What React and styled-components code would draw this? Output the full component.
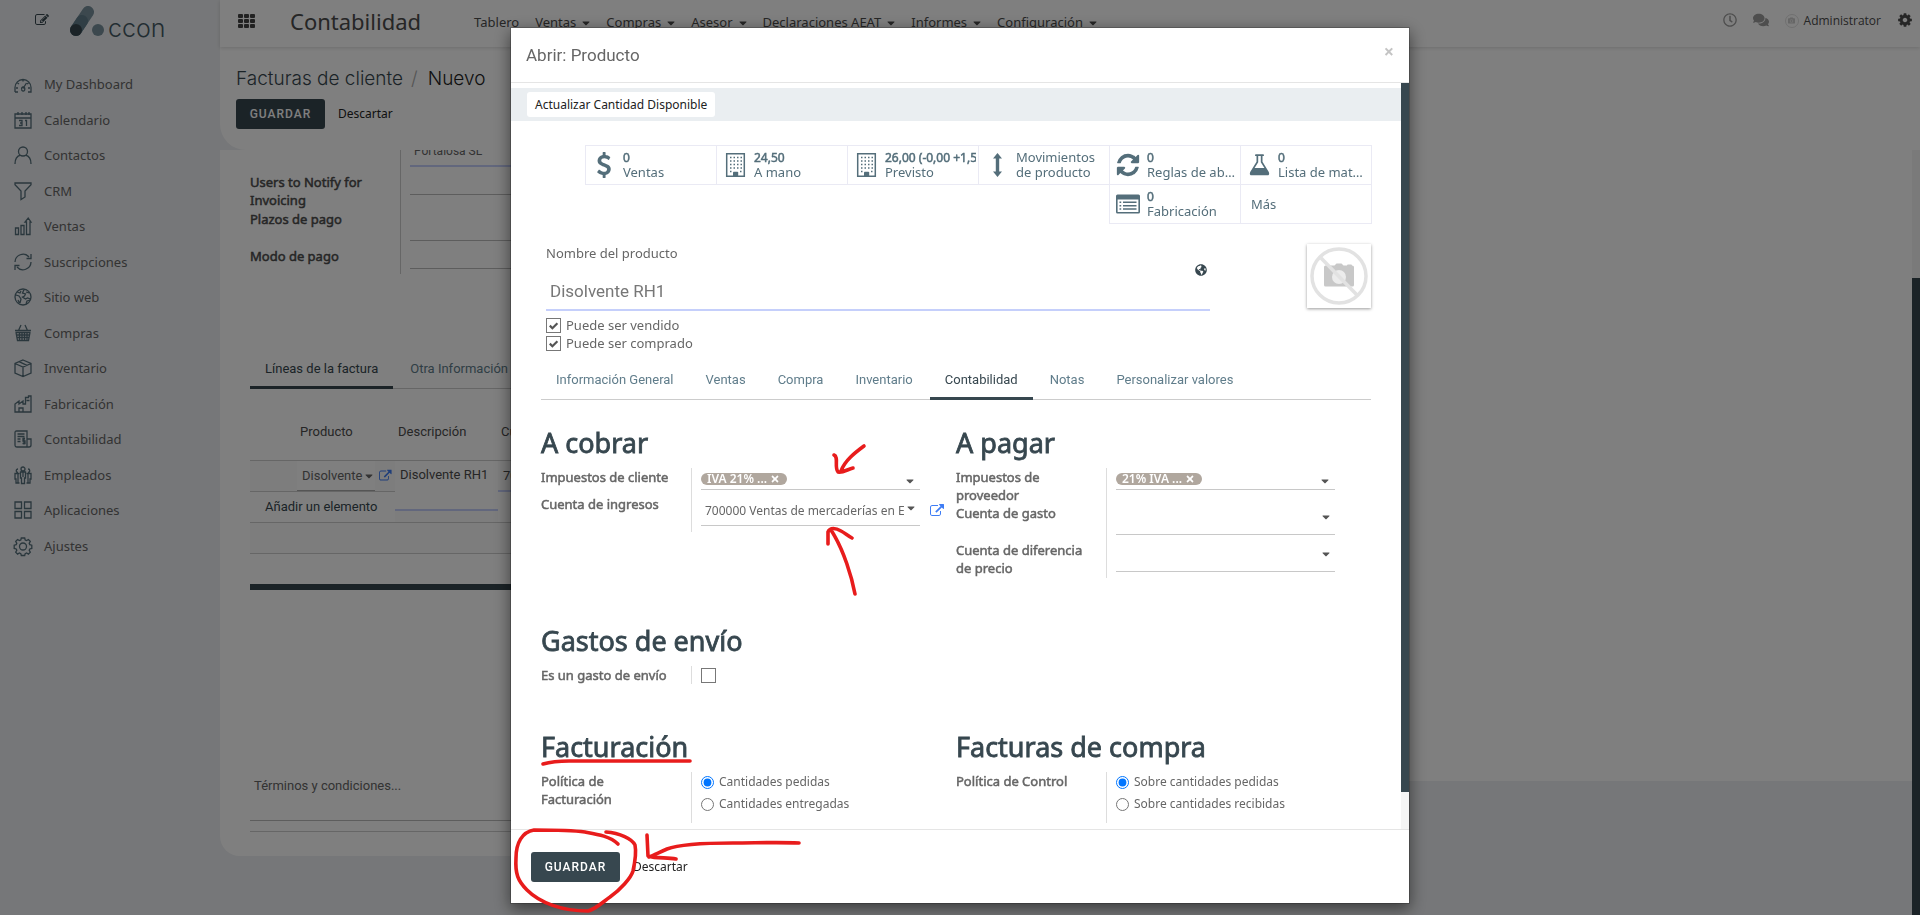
import React from 'react';
import styled, { createGlobalStyle, css } from 'styled-components';
import { FaComments, FaRegClock, FaGlobeAmericas, FaCaretDown, FaTimes, FaCamera } from 'react-icons/fa';

const GlobalStyle = createGlobalStyle`
  * {
    box-sizing: border-box;
  }
  body {
    margin: 0;
    overflow: hidden;
    font-family: "Noto Sans", "Open Sans", sans-serif;
    font-size: 13px;
    line-height: 18px;
    color: #666666;
  }
  button, input, select, textarea {
    font: inherit;
    color: inherit;
    margin: 0;
  }
  a {
    color: inherit;
    text-decoration: none;
  }
`;

// regular face thickened with an outline, keeps the regular widths
const thick = css`
  font-weight: 400;
  -webkit-text-stroke: 0.5px currentColor;
`;

/* ---------- page behind the dialog ---------- */

const Page = styled.div`
  display: grid;
  grid-template-columns: 220px minmax(0, 1fr);
  height: 100vh;
  overflow: hidden;
  background: #edeff2;
`;

const Brand = styled.div`
  display: flex;
  align-items: flex-start;
  height: 66px;
  padding: 6px 0 0 35px;
  color: #37474f;
`;

const EditLink = styled.a`
  margin: 7px 20px 0 0;
`;

const LogoText = styled.span`
  margin: 7px 0 0 3px;
  font-family: Inter, sans-serif;
  font-size: 25px;
  font-weight: 300;
  line-height: 30px;
  color: #455a64;
`;

const Menu = styled.ul`
  list-style: none;
  margin: 0;
  padding: 0;
`;

const MenuItem = styled.li`
  height: 36px;
  &:nth-child(even) {
    height: 35px;
  }
  a {
    display: flex;
    align-items: center;
    gap: 12px;
    height: 100%;
    padding-left: 14px;
  }
  svg {
    color: #546e7a;
  }
`;

const Main = styled.div`
  display: flex;
  flex-direction: column;
  min-width: 0;
`;

const TopBar = styled.header`
  display: flex;
  align-items: center;
  flex: none;
  height: 47px;
  padding: 0 7px 11px 18px;
  background: #ffffff;
  box-shadow: 0 1px 4px rgba(0, 0, 0, 0.15);
  z-index: 1;
`;

const AppsButton = styled.button`
  border: 0;
  padding: 10px 0 0;
  background: none;
  color: #444444;
`;

const AppName = styled.span`
  margin: 6px 53px 0 35px;
  font-size: 22px;
  line-height: 30px;
  color: #4c4c4c;
`;

const TopMenu = styled.nav`
  display: flex;
  gap: 16px;
  flex: 1;
  padding-top: 8px;
  color: #4c4c4c;
  a {
    display: flex;
    align-items: center;
    gap: 4px;
    white-space: nowrap;
  }
  svg {
    margin: 2px -2px 0 0;
  }
`;

const Systray = styled.div`
  display: flex;
  align-items: center;
  gap: 16px;
  padding-top: 3px;
  font-family: "Open Sans", sans-serif;
  font-size: 12px;
  color: #9c9c9c;
  > svg:last-child {
    color: #4c4c4c;
  }
`;

const User = styled.a`
  display: flex;
  align-items: center;
  gap: 5px;
  padding-top: 2px;
  color: #4c4c4c;
`;

const Avatar = styled.span`
  display: flex;
  align-items: center;
  justify-content: center;
  width: 14px;
  height: 14px;
  border: 1px solid #e0e0e0;
  border-radius: 50%;
  color: #cccccc;
`;

const ControlPanel = styled.div`
  flex: none;
  height: 103px;
  padding: 19px 16px 0;
  background: #ffffff;
  border-bottom-left-radius: 26px;
`;

const Breadcrumb = styled.div`
  display: flex;
  gap: 8px;
  font-family: Inter, sans-serif;
  font-size: 19px;
  font-weight: 300;
  line-height: 26px;
  color: #37474f;
  span {
    color: #aaaaaa;
  }
  strong {
    margin-left: 2px;
    font-weight: 300;
    color: #222222;
  }
`;

const Actions = styled.div`
  display: flex;
  align-items: center;
  padding-top: 7px;
`;

const PrimaryButton = styled.button`
  width: 89px;
  height: 30px;
  padding: 0;
  border: 0;
  border-radius: 3px;
  background: #37474f;
  color: #ffffff;
  font-family: Roboto, sans-serif;
  font-size: 12px;
  font-weight: 500;
  letter-spacing: 1px;
`;

const LinkButton = styled.button`
  border: 0;
  padding: 0 13px;
  background: none;
  color: #222222;
  font-size: 12px;
`;

const Scroller = styled.div`
  display: flex;
  align-items: flex-start;
  flex: 1;
  min-height: 0;
  overflow: hidden;
`;

const Sheet = styled.div`
  flex: 2;
  min-width: 0;
  padding: 0 30px 24px;
  background: #ffffff;
  border-bottom-left-radius: 20px;
`;

const Chatter = styled.div`
  flex: 1;
  height: 631px;
  background: #ffffff;
`;

const Track = styled.div`
  display: flex;
  flex-direction: column;
  flex: none;
  align-self: stretch;
  width: 8px;
  background: #f5f5f5;
`;

const Thumb = styled.div`
  margin-top: ${(p) => p.$top || '0'};
  height: ${(p) => p.$size};
  background: #37474f;
`;

const InvoiceFields = styled.div`
  display: grid;
  grid-template-columns: 151px minmax(0, 1fr);
  height: 124px;
`;

const InvoiceLabels = styled.div`
  display: flex;
  flex-direction: column;
  padding: 23px 24px 0 0;
  border-right: 1px solid #cccccc;
  color: #4c4c4c;
  ${thick}
  label + label {
    margin-top: 1px;
  }
  label:last-child {
    margin-top: 19px;
  }
`;

const InvoiceInputs = styled.div`
  margin-top: -13px;
  padding-left: 9px;
`;

const InvoiceInput = styled.input`
  display: block;
  width: 100%;
  height: ${(p) => p.$height}px;
  padding: 0 4px;
  border: 0;
  border-bottom: ${(p) => (p.$required ? '2px solid #c5cffb' : '1px solid #bbbbbb')};
  background: none;
  font-family: Roboto, sans-serif;
  font-size: 12px;
`;

const SheetTabs = styled.nav`
  display: flex;
  gap: 2px;
  margin-top: 76px;
  border-bottom: 1px solid #cccccc;
  font-family: Roboto, sans-serif;
`;

const Tab = styled.a`
  height: 39px;
  margin-bottom: -1px;
  padding: 10px 15px 0;
  border-bottom: 3px solid ${(p) => (p.$active ? '#37474f' : 'transparent')};
  color: ${(p) => (p.$active ? '#37474f' : '#607d8b')};
  white-space: nowrap;
`;

const Lines = styled.table`
  width: 100%;
  margin-top: 15px;
  table-layout: fixed;
  border-spacing: 0;
  font-family: Roboto, sans-serif;
  color: #4c4c4c;
  th, td {
    height: 31px;
    padding: 0 3px;
    border-bottom: 1px solid #cccccc;
    text-align: left;
    white-space: nowrap;
  }
  th {
    height: 57px;
    font-weight: 400;
  }
  td[rowspan] {
    padding: 0;
    vertical-align: top;
  }
  td:nth-child(4) {
    padding-left: 5px;
    border-bottom: 2px solid #c5cffb;
  }
`;

const LineRow = styled.tr`
  background: ${(p) => (p.$shaded ? '#fafafa' : 'none')};
`;

const ProductCell = styled.div`
  display: flex;
  align-items: center;
  gap: 4px;
  color: #666666;
  > svg {
    color: #3f7df5;
  }
`;

const ProductName = styled.span`
  display: flex;
  align-items: center;
  width: 80px;
  height: 30px;
  margin-left: -3px;
  padding-left: 5px;
  border-bottom: 1px solid #aaaaaa;
  background: #ffffff;
  svg {
    margin-left: 1px;
  }
`;

const LineText = styled.textarea`
  display: block;
  width: 103px;
  height: 50px;
  padding: 5px;
  border: 0;
  border-bottom: 2px solid #c5cffb;
  background: #ffffff;
  resize: none;
  overflow: hidden;
`;

const AddLine = styled.a`
  padding-left: 12px;
  color: #37474f;
`;

const ThickRule = styled.hr`
  height: 6px;
  margin: 30px 0 0;
  border: 0;
  background: #37474f;
`;

const Terms = styled.textarea`
  display: block;
  width: 100%;
  height: 46px;
  margin: 185px 0 10px;
  padding: 2px 4px;
  border: 0;
  border-bottom: 1px solid #bbbbbb;
  background: none;
  font-family: Roboto, sans-serif;
  resize: none;
  &::placeholder {
    color: #666666;
  }
`;

const ThinRule = styled.hr`
  height: 1px;
  margin: 0;
  border: 0;
  background: #cccccc;
`;

/* ---------- dialog ---------- */

const Backdrop = styled.div`
  position: fixed;
  inset: 0;
  z-index: 10;
  display: flex;
  justify-content: center;
  align-items: flex-start;
  padding: 27px 0 11px;
  background: rgba(0, 0, 0, 0.5);
`;

const Dialog = styled.section`
  position: relative;
  display: flex;
  flex-direction: column;
  width: 900px;
  max-width: 100%;
  max-height: 100%;
  border: 1px solid rgba(0, 0, 0, 0.2);
  background: #ffffff;
  background-clip: padding-box;
  box-shadow: 0 5px 15px rgba(0, 0, 0, 0.5);
`;

const DialogHeader = styled.header`
  display: flex;
  justify-content: space-between;
  align-items: flex-start;
  flex: none;
  height: 55px;
  padding: 15px;
  border-bottom: 1px solid #e5e5e5;
`;

const DialogTitle = styled.h4`
  margin: 0;
  font-family: Roboto, sans-serif;
  font-size: 17px;
  font-weight: 400;
  line-height: 24px;
`;

const CloseButton = styled.button`
  border: 0;
  padding: 0;
  background: none;
  color: #c4c4c4;
  font-size: 18px;
  font-weight: 700;
  line-height: 16px;
`;

const DialogBody = styled.div`
  display: flex;
  flex: 1;
  min-height: 0;
`;

const DialogContent = styled.div`
  flex: 1;
  min-width: 0;
  padding: 5px 0 44px;
  overflow: hidden;
`;

const StatusBar = styled.div`
  height: 33px;
  padding: 4px 16px;
  background: #eaeef1;
`;

const StatusButton = styled.button`
  height: 25px;
  padding: 0 8px;
  border: 0;
  border-radius: 3px;
  background: #ffffff;
  color: #222222;
  font-size: 12px;
`;

const Form = styled.div`
  padding: 24px 30px 0;
`;

const StatGrid = styled.div`
  display: grid;
  grid-template-columns: repeat(6, 131px);
  justify-content: end;
  margin-bottom: 21px;
`;

const StatButton = styled.button`
  display: flex;
  align-items: center;
  gap: 5px;
  grid-column: ${(p) => p.$column || 'auto'};
  height: 40px;
  margin: 0 -1px -1px 0;
  padding: 0 2px 0 4px;
  border: 1px solid #eaeaf4;
  background: none;
  color: #546e7a;
  text-align: left;
  line-height: 15px;
`;

const StatText = styled.span`
  display: block;
  min-width: 0;
  padding-left: ${(p) => (p.$plain ? 6 : 0)}px;
  strong, span {
    display: block;
    overflow-x: clip;
    white-space: nowrap;
  }
  strong {
    font-size: 12px;
    ${thick}
  }
  span {
    text-overflow: ellipsis;
  }
`;

const TitleRow = styled.div`
  display: flex;
  justify-content: space-between;
  padding-left: 5px;
`;

const TitleBlock = styled.div`
  flex: 0 1 664px;
`;

const NameLabel = styled.label`
  display: block;
`;

const NameField = styled.div`
  display: flex;
  align-items: flex-start;
  height: 49px;
  border-bottom: 2px solid #c5cffb;
  input {
    flex: 1;
    align-self: flex-end;
    height: 38px;
    padding: 1px 4px 0;
    border: 0;
    background: none;
    outline: none;
    font-family: Roboto, sans-serif;
    font-size: 17px;
    color: #777777;
  }
  svg {
    margin: 2px 3px 0 0;
    color: #37474f;
  }
`;

const ProductImage = styled.div`
  width: 64px;
  height: 64px;
  background: #ffffff;
  box-shadow: 0 1px 3px rgba(0, 0, 0, 0.4);
`;

const Checks = styled.div`
  display: flex;
  flex-direction: column;
  padding-top: 5px;
`;

const CheckLabel = styled.label`
  display: flex;
  align-items: center;
  gap: 5px;
  height: 18px;
`;

const tick =
  "url(\"data:image/svg+xml,%3Csvg xmlns='http://www.w3.org/2000/svg' viewBox='0 0 13 13'%3E%3Cpath d='M2.8 6.6l2.6 2.6 5-5' fill='none' stroke='%23555' stroke-width='2.2'/%3E%3C/svg%3E\")";

const Checkbox = styled.input.attrs({ type: 'checkbox' })`
  appearance: none;
  flex: none;
  width: 15px;
  height: 15px;
  border: 1px solid #777777;
  background: #ffffff;
  &:checked {
    background-image: ${tick};
  }
`;

const Tabs = styled(SheetTabs)`
  margin-top: 9px;
`;

const Groups = styled.div`
  display: grid;
  grid-template-columns: 1fr 1fr;
  margin-top: ${(p) => (p.$first ? 24 : 44)}px;
`;

const GroupTitle = styled.h2`
  margin: 0 0 6px;
  font-size: 27px;
  line-height: 38px;
  color: #37474f;
  ${thick}
  -webkit-text-stroke-width: 0.8px;
`;

const GroupRow = styled.div`
  display: grid;
  grid-template-columns: 150px 229px 1fr;
  min-height: ${(p) => p.$min}px;
  > label, > div:first-child {
    padding-right: 16px;
    ${thick}
  }
  > :nth-child(2) {
    padding-left: 9px;
    border-left: 1px solid #dddddd;
  }
`;

const FieldBox = styled.div`
  display: flex;
  align-items: center;
  height: ${(p) => p.$height}px;
  border-bottom: 1px solid #c8c8c8;
  > svg {
    flex: none;
    margin: ${(p) => p.$caret};
    color: #555555;
  }
`;

const Tag = styled.span`
  display: flex;
  align-items: center;
  gap: 3px;
  height: 12px;
  padding: 0 7px 0 6px;
  border-radius: 6px;
  background: #b0a79e;
  color: #ffffff;
  font-size: 12px;
  font-weight: 600;
  line-height: 12px;
`;

const TagInput = styled.input`
  flex: 1;
  min-width: 0;
  height: 18px;
  padding: 0;
  border: 0;
  background: none;
  outline: none;
`;

const Select = styled.select`
  appearance: none;
  flex: 1;
  min-width: 0;
  height: 30px;
  padding: 2px 0 0 4px;
  border: 0;
  background: none;
  font-size: 12px;
  text-overflow: clip;
`;

const OpenLink = styled.a`
  padding: 9px 0 0 10px;
  color: #3f7df5;
`;

const Radios = styled.div`
  display: flex;
  flex-direction: column;
  gap: 4px;
  padding-top: 1px;
`;

const RadioLabel = styled.label`
  display: flex;
  align-items: center;
  gap: 5px;
  height: 18px;
  font-size: 12px;
  white-space: nowrap;
  input {
    flex: none;
    width: 13px;
    height: 13px;
    accent-color: #0075ff;
  }
`;

const DialogFooter = styled.footer`
  display: flex;
  align-items: center;
  flex: none;
  height: 74px;
  padding: 0 20px;
  border-top: 1px solid #e5e5e5;
`;

const Marks = styled.svg`
  position: absolute;
  top: 0;
  left: 0;
  width: 898px;
  height: 875px;
  overflow: visible;
  pointer-events: none;
`;

/* ---------- icons ---------- */

const glyphs = {
  edit: 'M888 1184l116-116-152-152-116 116v56h96v96h56zm440-720q-16-16-33 1l-350 350q-17 17-1 33t33-1l350-350q17-17 1-33zm80 594v190q0 119-84.5 203.5t-203.5 84.5h-832q-119 0-203.5-84.5t-84.5-203.5v-832q0-119 84.5-203.5t203.5-84.5h832q63 0 117 25 15 7 18 23 3 17-9 29l-49 49q-14 14-32 8-23-6-45-6h-832q-66 0-113 47t-47 113v832q0 66 47 113t113 47h832q66 0 113-47t47-113v-126q0-13 9-22l64-64q15-15 35-7t20 29zm-96-738l288 288-672 672h-288v-288zm444 132l-92 92-288-288 92-92q28-28 68-28t68 28l152 152q28 28 28 68t-28 68z',
  external: 'M1408 928v320q0 119-84.5 203.5t-203.5 84.5h-832q-119 0-203.5-84.5t-84.5-203.5v-832q0-119 84.5-203.5t203.5-84.5h704q14 0 23 9t9 23v64q0 14-9 23t-23 9h-704q-66 0-113 47t-47 113v832q0 66 47 113t113 47h832q66 0 113-47t47-113v-320q0-14 9-23t23-9h64q14 0 23 9t9 23zm384-864v512q0 26-19 45t-45 19-45-19l-176-176-652 652q-10 10-23 10t-23-10l-114-114q-10-10-10-23t10-23l652-652-176-176q-19-19-19-45t19-45 45-19h512q26 0 45 19t19 45z',
  refresh: 'M1639 1056q0 5-1 7-64 268-268 434.5t-478 166.5q-146 0-282.5-55t-243.5-157l-129 129q-19 19-45 19t-45-19-19-45v-448q0-26 19-45t45-19h448q26 0 45 19t19 45-19 45l-137 137q71 66 161 102t187 36q134 0 250-65t186-179q11-17 53-117 8-23 30-23h192q13 0 22.5 9.5t9.5 22.5zm25-800v448q0 26-19 45t-45 19h-448q-26 0-45-19t-19-45 19-45l138-138q-148-137-349-137-134 0-250 65t-186 179q-11 17-53 117-8 23-30 23h-199q-13 0-22.5-9.5t-9.5-22.5v-7q65-268 270-434.5t480-166.5q146 0 284 55.5t245 156.5l130-129q19-19 45-19t45 19 19 45z',
  dollar: 'M1362 1185q0 153-99.5 263.5t-258.5 136.5v175q0 14-9 23t-23 9h-135q-13 0-22.5-9.5t-9.5-22.5v-175q-66-9-127.5-31t-101.5-44.5-74-48-46.5-37.5-17.5-18q-17-21-2-41l103-135q7-10 23-12 15-2 24 9l2 2q113 99 243 125 37 8 74 8 81 0 142.5-43t61.5-122q0-28-15-53t-33.5-42-58.5-37.5-66-32-80-32.5q-39-16-61.5-25t-61.5-26.5-62.5-31-56.5-35.5-53.5-42.5-43.5-49-35.5-58-21-66.5-8.5-78q0-138 98-242t255-134v-180q0-13 9.5-22.5t22.5-9.5h135q14 0 23 9t9 23v176q57 6 110.5 23t87 33.5 63.5 37.5 39 29 15 14q17 18 5 38l-81 146q-8 15-23 16-14 3-27-7-3-3-14.5-12t-39-26.5-58.5-32-74.5-26-85.5-11.5q-95 0-155 43t-60 111q0 26 8.5 48t29.5 41.5 39.5 33 56 31 60.5 27 70 27.5q53 20 81 31.5t76 35 75.5 42.5 62 50 53 63.5 31.5 76.5 13 94z',
  cog: 'M1152 896q0-106-75-181t-181-75-181 75-75 181 75 181 181 75 181-75 75-181zm512-109v222q0 12-8 23t-20 13l-185 28q-19 54-39 91 35 50 107 138 10 12 10 25t-9 23q-27 37-99 108t-94 71q-12 0-26-9l-138-108q-44 23-91 38-16 136-29 186-7 28-36 28h-222q-14 0-24.5-8.5t-11.5-21.5l-28-184q-49-16-90-37l-141 107q-10 9-25 9-14 0-25-11-126-114-165-168-7-10-7-23 0-12 8-23 15-21 51-66.5t54-70.5q-27-50-41-99l-183-27q-13-2-21-12.5t-8-23.5v-222q0-12 8-23t19-13l186-28q14-46 39-92-40-57-107-138-10-12-10-24 0-10 9-23 26-36 98.5-107.5t94.5-71.5q13 0 26 10l138 107q44-23 91-38 16-136 29-186 7-28 36-28h222q14 0 24.5 8.5t11.5 21.5l28 184q49 16 90 37l142-107q9-9 24-9 13 0 25 10 129 119 165 170 7 8 7 22 0 12-8 23-15 21-51 66.5t-54 70.5q26 50 41 98l183 28q13 2 21 12.5t8 23.5z',
};

const Glyph = ({ name, size }) => (
  <svg width={size} height={size} viewBox="0 0 1792 1792" fill="currentColor" aria-hidden="true">
    <path d={glyphs[name]} />
  </svg>
);

const StatIcon = ({ name }) => {
  if (name === 'dollar' || name === 'refresh') {
    return <Glyph name={name} size={26} />;
  }
  return (
    <svg width="28" height="26" viewBox="0 0 28 26" fill="currentColor" aria-hidden="true">
      {name === 'building' && (
        <>
          <path d="M5.7 1.7h17.6v22.6H5.7z" fill="none" stroke="currentColor" strokeWidth="1.5" />
          <path d="M9 5.5h12M9 9h12M9 12.5h12M9 16h12M9 19.5h2M19 19.5h2" fill="none" stroke="currentColor" strokeWidth="1.5" strokeDasharray="1.5 2" />
          <path d="M12 25v-4.5q0-.7.7-.7h3.8q.7 0 .7.7V25z" />
        </>
      )}
      {name === 'arrows' && <path d="M14.5 1l4.5 5.5h-2.8v13H19L14.5 25 10 19.5h2.8v-13H10z" />}
      {name === 'flask' && (
        <path d="M10 3.2q0-.9.9-.9h7.2q.9 0 .9.9t-.9.9h-.6v5.6l6.3 10.2q1.3 3.4-1.7 3.4H6.9q-3 0-1.7-3.4l6.3-10.2V4.1h-.6q-.9 0-.9-.9zm3.2.9v6.2L9.6 16h9.8l-3.6-5.7V4.1z" fillRule="evenodd" />
      )}
      {name === 'list' && (
        <>
          <path d="M3.500 3.500h21q1.500 0 1.500 1.500v16q0 1.500-1.500 1.500h-21Q2 22.500 2 21V5q0-1.500 1.500-1.500zM3.600 8.500v12.400h20.800V8.500z" fillRule="evenodd" />
          <path d="M5.5 11.3h1.7M5.5 14.7h1.7M5.5 18.1h1.7M9 11.3h13.5M9 14.7h13.5M9 18.1h13.5" fill="none" stroke="currentColor" strokeWidth="1.5" />
        </>
      )}
    </svg>
  );
};

const menuPaths = {
  dashboard: 'M1 17v-4.500a8 8 0 0 1 16 0V17h-3M1 17h3M9 4.500v2M3.500 8l1.500 1M14.500 8L13 9M2 13h2M14 13h2M9 13.500L12.500 8M7.700 14a1.600 1.600 0 1 0 3 0a1.600 1.600 0 1 0-3 0',
  calendar: 'M1 3h16v14H1zM1 7h16M4 1v3M8 1v3M12 1v3M15 1v3M5 9.500h3v5H5M6 12h2M11 9.500h1.500v5.500',
  contact: 'M9 1a4.500 4.500 0 1 0 0 9a4.500 4.500 0 0 0 0-9M1 18q0-7.500 5.500-8.800M17 18q0-7.500-5.500-8.800',
  funnel: 'M1 1h16v1.800L11 9v6l-4 2.500V9L1 2.800z',
  sales: 'M1.500 11h3v6.500h-3zM7 8.500h3v9H7zM12.500 17.500V5H11l3.200-4L17 5h-1v12.500z',
  sync: 'M1 9a8 8 0 0 1 14-5M17 1v4.500h-4.500M17 9a8 8 0 0 1-14 5M1 17v-4.500h4.500',
  globe: 'M9 1a8 8 0 1 0 0 16a8 8 0 0 0 0-16M3 4l3 1 1-2M2 7l3 1 2 3-1 4M10 1.500L8.500 5l3 1-1 2-2 1 3 2 2-1 3 1M12 4l3 1M12 16l1-3 3-1M4 12l1.500 3',
  basket: 'M1 6.500h16M2 8.500l1.500 8h11l1.500-8M4.500 6.500L7 1M13.500 6.500L11 1M1.500 8.500h15M5.500 9v7M8 9v7M10.500 9v7M13 9v7M3 11h12M3 13.500h12',
  box: 'M9 1l8 3.500v9.500L9 17.500 1 14V4.500zM1 4.500L9 8l8-3.500M9 8v9.500M5 2.700L13 6.300',
  factory: 'M1 17V9l4-3v3l4-3v3h2.500V2.500h3V1H17v16zM5 17v-4h4v4M12.500 5.500h3',
  invoice: 'M2.500 1H13v16H3Q1 17 1 15V2.500Q1 1 2.500 1zM13 9h4v6q0 2-2 2h-3M3.500 4h7M3.500 6.500h7M3.500 9h3M3.500 11.500h3M11 8.500H9v2.500h2v2.500H8.500M10 7.500v7',
  people: 'M9 1a1.800 1.800 0 1 0 0 4a1.800 1.800 0 0 0 0-4M4 3a1.600 1.600 0 1 0 0 3.500M14 3a1.600 1.600 0 1 1 0 3.500M6.500 6h5v6h-1v5.500h-3V12h-1zM5.500 7.500H1V13h1v4h3.500M12.500 7.500H17V13h-1v4h-3.500M4 8v9M14 8v9M9 6v5',
  apps: 'M1 1h6.500v6.500H1zM10.500 1H17v6.500h-6.500zM1 10.500h6.500V17H1zM10.500 10.500H17V17h-6.500z',
  gear: 'M7.300 1h3.400l.5 2 1.400.6 1.800-1.100 1.900 1.900-1.100 1.900.6 1.300 2 .6v3.200l-2 .6-.6 1.300 1.100 1.900-1.900 1.900-1.800-1.100-1.400.6-.5 1.900H7.300l-.5-1.900-1.400-.6-1.800 1.100-1.900-1.900 1.100-1.900-.6-1.300-2-.6V8.200l2-.6.6-1.300-1.100-1.900 1.900-1.900 1.800 1.100L6.800 3zM9 6a3.500 3.500 0 1 0 0 7a3.500 3.500 0 0 0 0-7',
};

const MenuIcon = ({ name }) => (
  <svg width="18" height="18" viewBox="0 0 18 18" fill="none" stroke="currentColor" strokeWidth="1.3" overflow="visible" aria-hidden="true">
    <path d={menuPaths[name]} />
  </svg>
);

const Logo = () => (
  <svg width="36" height="32" viewBox="0 0 36 32" aria-hidden="true">
    <path d="M7 24L19 6" stroke="#78909c" strokeWidth="12" strokeLinecap="round" />
    <path d="M7 24l6-9" stroke="#607d8b" strokeWidth="12" strokeLinecap="round" />
    <circle cx="7" cy="24" r="6" fill="#37474f" />
    <circle cx="29" cy="24" r="6" fill="#78909c" />
  </svg>
);

const AppsIcon = () => (
  <svg width="17" height="14" viewBox="0 0 17 14" fill="currentColor" aria-hidden="true">
    {[0, 5, 10].map((y) =>
      [0, 6, 12].map((x) => <rect key={`${x}-${y}`} x={x} y={y} width="5" height="4" rx="1" />)
    )}
  </svg>
);

const NoPhoto = () => (
  <svg width="64" height="64" viewBox="0 0 64 64" aria-hidden="true">
    <path d="M17 23q0-1.500 1.500-1.500h9l2-2h5l2 2h3.500q0-1 1-1h3q1 0 1 1 2 0 2 1.500v18q0 1.500-1.500 1.500h-27Q17 42.500 17 41z" fill="#c8c8c8" />
    <circle cx="32" cy="33" r="7" fill="#ececec" />
    <circle cx="32" cy="32" r="27" fill="none" stroke="#e2e2e2" strokeWidth="3.5" />
    <path d="M14 14l36 37" stroke="#e2e2e2" strokeWidth="3.5" />
  </svg>
);

/* ---------- data ---------- */

const menu = [
  ['dashboard', 'My Dashboard'],
  ['calendar', 'Calendario'],
  ['contact', 'Contactos'],
  ['funnel', 'CRM'],
  ['sales', 'Ventas'],
  ['sync', 'Suscripciones'],
  ['globe', 'Sitio web'],
  ['basket', 'Compras'],
  ['box', 'Inventario'],
  ['factory', 'Fabricación'],
  ['invoice', 'Contabilidad'],
  ['people', 'Empleados'],
  ['apps', 'Aplicaciones'],
  ['gear', 'Ajustes'],
];

const topMenu = ['Ventas', 'Compras', 'Asesor', 'Declaraciones AEAT', 'Informes', 'Configuración'];

const stats = [
  { icon: 'dollar', value: '0', label: 'Ventas' },
  { icon: 'building', value: '24,50', label: 'A mano' },
  { icon: 'building', value: '26,00 (-0,00 +1,50)', label: 'Previsto' },
  { icon: 'arrows', lines: ['Movimientos', 'de producto'] },
  { icon: 'refresh', value: '0', label: 'Reglas de abastecimiento' },
  { icon: 'flask', value: '0', label: 'Lista de materiales' },
  { icon: 'list', value: '0', label: 'Fabricación', column: 5 },
];

const tabs = ['Información General', 'Ventas', 'Compra', 'Inventario', 'Contabilidad', 'Notas', 'Personalizar valores'];

/* ---------- parts ---------- */

const IconSlot = styled.span`
  display: flex;
  justify-content: center;
  width: 28px;
  flex: none;
`;

const Stat = ({ icon, value, label, lines, column }) => (
  <StatButton type="button" $column={column}>
    <IconSlot>
      <StatIcon name={icon} />
    </IconSlot>
    <StatText>
      {lines ? lines.map((line) => <span key={line}>{line}</span>) : (
        <>
          <strong>{value}</strong>
          <span>{label}</span>
        </>
      )}
    </StatText>
  </StatButton>
);

const TaxRow = ({ id, label, tag, min }) => (
  <GroupRow $min={min}>
    <label htmlFor={id}>{label}</label>
    <div>
      <FieldBox $height={22} $caret="5px 4px 0 0">
        <Tag>
          {tag} <FaTimes size={10} />
        </Tag>
        <TagInput id={id} />
        <FaCaretDown size={12} />
      </FieldBox>
    </div>
  </GroupRow>
);

const AccountRow = ({ id, label, value }) => (
  <GroupRow $min={37}>
    <label htmlFor={id}>{label}</label>
    <div>
      <FieldBox $height={31} $caret="0 3px 5px 0">
        <Select id={id}>
          <option>{value}</option>
        </Select>
        <FaCaretDown size={12} />
      </FieldBox>
    </div>
    {value && (
      <OpenLink href="#cuenta" aria-label="Abrir cuenta">
        <Glyph name="external" size={14} />
      </OpenLink>
    )}
  </GroupRow>
);

const PolicyRow = ({ name, label, options }) => (
  <GroupRow $min={51}>
    <div>{label}</div>
    <Radios>
      {options.map((option, i) => (
        <RadioLabel key={option}>
          <input type="radio" name={name} defaultChecked={i === 0} />
          {option}
        </RadioLabel>
      ))}
    </Radios>
  </GroupRow>
);

const Sidebar = () => (
  <aside>
    <Brand>
      <EditLink href="#editar" aria-label="Editar">
        <Glyph name="edit" size={14} />
      </EditLink>
      <Logo />
      <LogoText>ccon</LogoText>
    </Brand>
    <Menu>
      {menu.map(([icon, text]) => (
        <MenuItem key={text}>
          <a href="#menu">
            <MenuIcon name={icon} />
            {text}
          </a>
        </MenuItem>
      ))}
    </Menu>
  </aside>
);

const Invoice = () => (
  <Sheet>
    <InvoiceFields>
      <InvoiceLabels>
        <label htmlFor="notify">Users to Notify for Invoicing</label>
        <label htmlFor="terms">Plazos de pago</label>
        <label htmlFor="mode">Modo de pago</label>
      </InvoiceLabels>
      <InvoiceInputs>
        <InvoiceInput $height={30} $required aria-label="Cliente" defaultValue="Portalosa SL" />
        <InvoiceInput $height={28} id="notify" />
        <InvoiceInput $height={46} id="terms" />
        <InvoiceInput $height={28} id="mode" />
      </InvoiceInputs>
    </InvoiceFields>
    <SheetTabs>
      <Tab href="#lineas" $active>Líneas de la factura</Tab>
      <Tab href="#otra">Otra Información</Tab>
    </SheetTabs>
    <Lines>
      <colgroup>
        <col width="47" />
        <col width="98" />
        <col width="103" />
        <col />
      </colgroup>
      <thead>
        <tr>
          <th />
          <th>Producto</th>
          <th>Descripción</th>
          <th>Cuenta</th>
        </tr>
      </thead>
      <tbody>
        <LineRow $shaded>
          <td />
          <td>
            <ProductCell>
              <ProductName>
                Disolvente
                <FaCaretDown size={12} />
              </ProductName>
              <Glyph name="external" size={14} />
            </ProductCell>
          </td>
          <td rowSpan="2">
            <LineText aria-label="Descripción" defaultValue="Disolvente RH1" />
          </td>
          <td>700000</td>
        </LineRow>
        <LineRow>
          <td colSpan="2">
            <AddLine href="#linea">Añadir un elemento</AddLine>
          </td>
          <td />
        </LineRow>
        <LineRow $shaded>
          <td colSpan="4" />
        </LineRow>
      </tbody>
    </Lines>
    <ThickRule />
    <Terms aria-label="Términos y condiciones" placeholder="Términos y condiciones..." />
    <ThinRule />
  </Sheet>
);

const ProductDialog = () => (
  <Dialog role="dialog" aria-label="Abrir: Producto">
    <DialogHeader>
      <DialogTitle>Abrir: Producto</DialogTitle>
      <CloseButton type="button" aria-label="Cerrar">×</CloseButton>
    </DialogHeader>
    <DialogBody>
      <DialogContent>
        <StatusBar>
          <StatusButton type="button">Actualizar Cantidad Disponible</StatusButton>
        </StatusBar>
        <Form>
          <StatGrid>
            {stats.map((stat) => (
              <Stat key={stat.label || 'moves'} {...stat} />
            ))}
            <StatButton type="button" $column={6}>
              <StatText $plain>Más</StatText>
            </StatButton>
          </StatGrid>
          <TitleRow>
            <TitleBlock>
              <NameLabel htmlFor="name">Nombre del producto</NameLabel>
              <NameField>
                <input id="name" defaultValue="Disolvente RH1" />
                <FaGlobeAmericas size={12} />
              </NameField>
              <Checks>
                <CheckLabel>
                  <Checkbox defaultChecked />
                  Puede ser vendido
                </CheckLabel>
                <CheckLabel>
                  <Checkbox defaultChecked />
                  Puede ser comprado
                </CheckLabel>
              </Checks>
            </TitleBlock>
            <ProductImage>
              <NoPhoto />
            </ProductImage>
          </TitleRow>
          <Tabs>
            {tabs.map((tab) => (
              <Tab key={tab} href="#tab" $active={tab === 'Contabilidad'}>
                {tab}
              </Tab>
            ))}
          </Tabs>
          <Groups $first>
            <div>
              <GroupTitle>A cobrar</GroupTitle>
              <TaxRow id="tax-out" label="Impuestos de cliente" tag="IVA 21% ..." min={27} />
              <AccountRow id="income" label="Cuenta de ingresos" value="700000 Ventas de mercaderías en E" />
            </div>
            <div>
              <GroupTitle>A pagar</GroupTitle>
              <TaxRow id="tax-in" label="Impuestos de proveedor" tag="21% IVA ..." min={36} />
              <AccountRow id="expense" label="Cuenta de gasto" />
              <AccountRow id="difference" label="Cuenta de diferencia de precio" />
            </div>
          </Groups>
          <Groups>
            <div>
              <GroupTitle>Gastos de envío</GroupTitle>
              <GroupRow $min={18}>
                <label htmlFor="shipping">Es un gasto de envío</label>
                <CheckLabel as="div">
                  <Checkbox id="shipping" />
                </CheckLabel>
              </GroupRow>
            </div>
          </Groups>
          <Groups>
            <div>
              <GroupTitle>Facturación</GroupTitle>
              <PolicyRow name="invoicing" label="Política de Facturación" options={['Cantidades pedidas', 'Cantidades entregadas']} />
            </div>
            <div>
              <GroupTitle>Facturas de compra</GroupTitle>
              <PolicyRow name="control" label="Política de Control" options={['Sobre cantidades pedidas', 'Sobre cantidades recibidas']} />
            </div>
          </Groups>
        </Form>
      </DialogContent>
      <Track>
        <Thumb $size="95%" />
      </Track>
    </DialogBody>
    <DialogFooter>
      <PrimaryButton type="button">GUARDAR</PrimaryButton>
      <LinkButton type="button">Descartar</LinkButton>
    </DialogFooter>
    <Marks viewBox="511 28 898 875" fill="none" stroke="#e81c1c" strokeWidth="3.6" strokeLinecap="round" strokeLinejoin="round" aria-hidden="true">
      <path d="M864 446C856 452 845 460 841 471M834 455C839 457 834 467 838 472C843 473 848 469 853 468" />
      <path d="M855 594C852 578 844 550 831 530M828 544L828 532C830 527 836 528 841 531C845 533 848 536 852 538" />
      <path d="M543 764C550 762 558 761 569 761H690" />
      <path d="M618 844C610 836 596 834 585 832C570 830 548 830 534 830C522 832 516 843 516 858C515 874 518 881 527 890C540 903 562 911 588 911C596 909 604 901 610 897C620 890 631 878 633 871C635 862 636 850 635 845C632 839 620 833 606 832" />
      <path d="M799 843C777 842 755 843 733 843C705 843 680 844 667 849C660 852 654 855 649 857M647 835L648 856C657 859 667 857 676 859" />
    </Marks>
  </Dialog>
);

export default function App() {
  return (
    <>
      <GlobalStyle />
      <Page>
        <Sidebar />
        <Main>
          <TopBar>
            <AppsButton type="button" aria-label="Aplicaciones">
              <AppsIcon />
            </AppsButton>
            <AppName>Contabilidad</AppName>
            <TopMenu>
              <a href="#tablero">Tablero</a>
              {topMenu.map((item) => (
                <a key={item} href="#menu">
                  {item}
                  <FaCaretDown size={12} />
                </a>
              ))}
            </TopMenu>
            <Systray>
              <FaRegClock size={14} />
              <FaComments size={16} />
              <User href="#usuario">
                <Avatar>
                  <FaCamera size={7} />
                </Avatar>
                Administrator
              </User>
              <Glyph name="cog" size={16} />
            </Systray>
          </TopBar>
          <ControlPanel>
            <Breadcrumb>
              <a href="#facturas">Facturas de cliente</a>
              <span>/</span>
              <strong>Nuevo</strong>
            </Breadcrumb>
            <Actions>
              <PrimaryButton type="button">GUARDAR</PrimaryButton>
              <LinkButton type="button">Descartar</LinkButton>
            </Actions>
          </ControlPanel>
          <Scroller>
            <Invoice />
            <Chatter />
            <Track>
              <Thumb $top="128px" $size="100%" />
            </Track>
          </Scroller>
        </Main>
      </Page>
      <Backdrop>
        <ProductDialog />
      </Backdrop>
    </>
  );
}
